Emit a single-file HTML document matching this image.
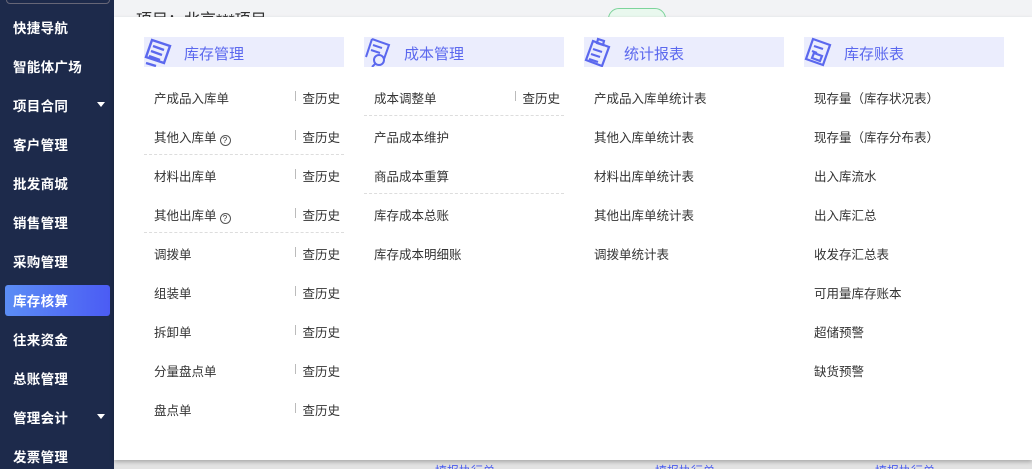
<!DOCTYPE html>
<html><head><meta charset="utf-8"><style>
*{margin:0;padding:0;box-sizing:border-box}
body{width:1032px;height:469px;overflow:hidden;background:#eaeaea;font-family:"Liberation Sans","Noto Sans CJK SC",sans-serif;position:relative}
.sb{position:absolute;left:0;top:0;width:114px;height:469px;background:#1d2a4b}
.sb .it{position:absolute;left:13px;color:#fff;font-size:13.5px;font-weight:bold;letter-spacing:0.3px;margin-top:-3px}
.sb .arr{position:absolute;left:97px;width:0;height:0;border-left:4px solid transparent;border-right:4px solid transparent;border-top:5px solid #fff}
.act{position:absolute;left:5px;top:285px;width:105px;height:31px;border-radius:3px;background:linear-gradient(90deg,#5b8df5,#4b5cf4)}
.topbar{position:absolute;left:114px;top:0;width:918px;height:17px;background:#f2f3f5;overflow:hidden}
.topbar .t{position:absolute;left:22px;top:6px;font-size:16px;color:#333}
.tag{position:absolute;left:494px;top:8px;width:58px;height:22px;border:1px solid #7dd49b;border-radius:11px;background:#e9f8ee}
.bottom{position:absolute;left:114px;top:460px;width:918px;height:9px;background:#e2e2e2;overflow:hidden}
.bottom span{position:absolute;top:2px;font-size:12px;color:#4a5cf0}
.panel{position:absolute;left:114px;top:17px;width:918px;height:443px;background:#fff;box-shadow:0 2px 4px rgba(0,0,0,.25)}
.col{position:absolute;top:20px;width:200px}
.hd{height:30px;background:#ebedfd;position:relative;margin-bottom:10px}
.hd span{position:absolute;left:40px;top:6px;font-size:15px;color:#5b68ee}
.hd svg{position:absolute;left:0;top:0}
.row{position:relative;height:39px;font-size:12.5px;color:#333}
.row .l{position:absolute;left:10px;top:11px}
.row .r{position:absolute;right:4px;top:11px}
.row .r:before{content:"";position:absolute;left:-7px;top:3px;width:1px;height:10px;background:#bbb}
.dash{border-bottom:1px dashed #ddd}
.q{display:inline-block;width:11px;height:11px;border:1px solid #555;border-radius:50%;font-size:8px;line-height:9px;text-align:center;vertical-align:-1px;margin-left:3px}
</style></head><body>
<div class="topbar"><div class="t">项目：北京***项目</div><div class="tag"></div></div>
<div class="sb">
<div style="position:absolute;left:6px;top:-10px;width:104px;height:14px;border:1px solid #667;border-radius:4px"></div>
<div class="it" style="top:20px">快捷导航</div>
<div class="it" style="top:59px">智能体广场</div>
<div class="it" style="top:98px">项目合同</div><div class="arr" style="top:102px"></div>
<div class="it" style="top:137px">客户管理</div>
<div class="it" style="top:176px">批发商城</div>
<div class="it" style="top:215px">销售管理</div>
<div class="it" style="top:254px">采购管理</div>
<div class="act"></div>
<div class="it" style="top:293px">库存核算</div>
<div class="it" style="top:332px">往来资金</div>
<div class="it" style="top:371px">总账管理</div>
<div class="it" style="top:410px">管理会计</div><div class="arr" style="top:414px"></div>
<div class="it" style="top:449px">发票管理</div>
</div>
<div class="bottom"><span style="left:321px">填报执行单</span><span style="left:541px">填报执行单</span><span style="left:761px">填报执行单</span></div>
<div class="panel">
<div class="col" style="left:30px">
<div class="hd"><svg width="34" height="30" viewBox="0 0 34 30" fill="none" stroke="#5b68ee" stroke-width="2.4"><path d="M8 3l18 6-6 17-18-6z"/><path d="M9 9l11 4M7 14l11 4M5 19l11 4"/><path d="M2 26l10 3"/></svg><span>库存管理</span></div>
<div class="row"><span class="l">产成品入库单</span><span class="r">查历史</span></div>
<div class="row dash"><span class="l">其他入库单<span class="q">?</span></span><span class="r">查历史</span></div>
<div class="row"><span class="l">材料出库单</span><span class="r">查历史</span></div>
<div class="row dash"><span class="l">其他出库单<span class="q">?</span></span><span class="r">查历史</span></div>
<div class="row"><span class="l">调拨单</span><span class="r">查历史</span></div>
<div class="row"><span class="l">组装单</span><span class="r">查历史</span></div>
<div class="row"><span class="l">拆卸单</span><span class="r">查历史</span></div>
<div class="row"><span class="l">分量盘点单</span><span class="r">查历史</span></div>
<div class="row"><span class="l">盘点单</span><span class="r">查历史</span></div>
</div>
<div class="col" style="left:250px">
<div class="hd"><svg width="34" height="30" viewBox="0 0 34 30" fill="none" stroke="#5b68ee" stroke-width="2"><path d="M8 2l17 6-5 14M2 20l6-18"/><path d="M9 8l9 3M7 13l9 3"/><circle cx="15" cy="23" r="5"/><path d="M11 27l-3 3"/></svg><span>成本管理</span></div>
<div class="row dash"><span class="l">成本调整单</span><span class="r">查历史</span></div>
<div class="row"><span class="l">产品成本维护</span></div>
<div class="row dash"><span class="l">商品成本重算</span></div>
<div class="row"><span class="l">库存成本总账</span></div>
<div class="row"><span class="l">库存成本明细账</span></div>
</div>
<div class="col" style="left:470px">
<div class="hd"><svg width="34" height="30" viewBox="0 0 34 30" fill="none" stroke="#5b68ee" stroke-width="2.2"><path d="M9 4l16 6-7 19-16-6z"/><path d="M14 2l6 2-1 4-6-2z"/><path d="M9 12l9 3M7 17l9 3M5 22l9 3"/></svg><span>统计报表</span></div>
<div class="row"><span class="l">产成品入库单统计表</span></div>
<div class="row"><span class="l">其他入库单统计表</span></div>
<div class="row"><span class="l">材料出库单统计表</span></div>
<div class="row"><span class="l">其他出库单统计表</span></div>
<div class="row"><span class="l">调拨单统计表</span></div>
</div>
<div class="col" style="left:690px">
<div class="hd"><svg width="34" height="30" viewBox="0 0 34 30" fill="none" stroke="#5b68ee" stroke-width="2.2"><path d="M9 2l17 6-7 20-17-6z"/><path d="M10 9l9 3M8 14l5 2"/><path d="M8 21l8 3 2-5-8-3z"/></svg><span>库存账表</span></div>
<div class="row"><span class="l">现存量（库存状况表）</span></div>
<div class="row"><span class="l">现存量（库存分布表）</span></div>
<div class="row"><span class="l">出入库流水</span></div>
<div class="row"><span class="l">出入库汇总</span></div>
<div class="row"><span class="l">收发存汇总表</span></div>
<div class="row"><span class="l">可用量库存账本</span></div>
<div class="row"><span class="l">超储预警</span></div>
<div class="row"><span class="l">缺货预警</span></div>
</div>
</div>
</body></html>
